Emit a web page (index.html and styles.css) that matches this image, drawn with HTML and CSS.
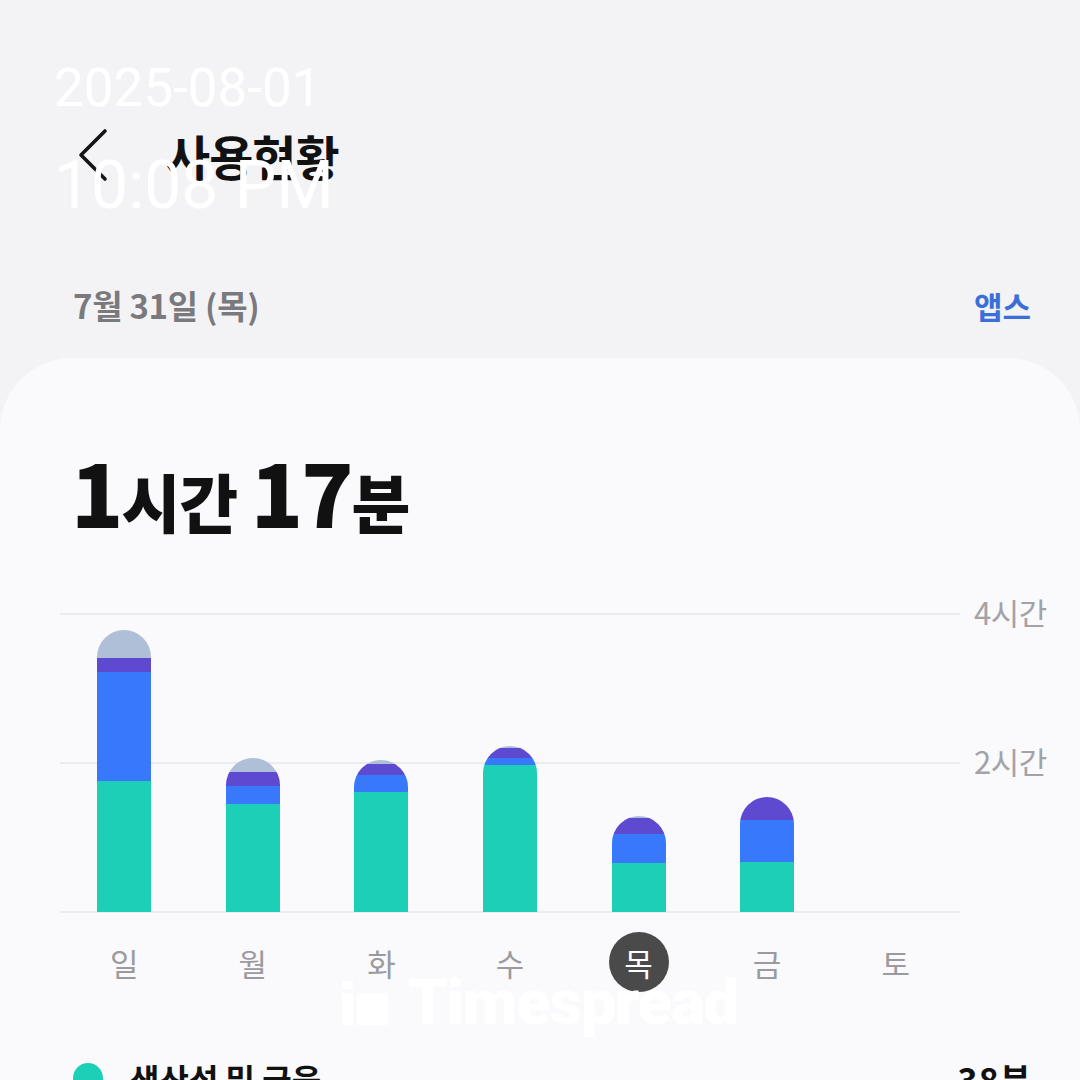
FILE: index.html
```html
<!doctype html>
<html>
<head>
<meta charset="utf-8">
<title>사용현황</title>
<link rel="stylesheet" href="styles.css">
</head>
<body>
	<div class="header">
		<svg class="back" width="34" height="54" viewBox="0 0 34 54"><polyline points="29,3 5,27 29,51" fill="none" stroke="#151515" stroke-width="3.6" stroke-linecap="round" stroke-linejoin="round"/></svg>
		<h1 class="title">사용현황</h1>
	</div>
	<div class="subhead">
		<span class="date">7월 31일 (목)</span>
		<span class="apps">앱스</span>
	</div>
	<div class="card">
		<div class="total"><b>1</b>시간 <b>17</b>분</div>
		<div class="chart">
			<div class="plot">
				<div class="col"><div class="bar">
					<i class="s-other" style="height:28px"></i><i class="s-purple" style="height:14px"></i><i class="s-blue" style="height:109px"></i><i class="s-teal" style="height:131px"></i>
				</div></div>
				<div class="col"><div class="bar">
					<i class="s-other" style="height:14px"></i><i class="s-purple" style="height:14px"></i><i class="s-blue" style="height:18px"></i><i class="s-teal" style="height:108px"></i>
				</div></div>
				<div class="col"><div class="bar">
					<i class="s-other" style="height:4px"></i><i class="s-purple" style="height:11px"></i><i class="s-blue" style="height:17px"></i><i class="s-teal" style="height:120px"></i>
				</div></div>
				<div class="col"><div class="bar">
					<i class="s-other" style="height:2px"></i><i class="s-purple" style="height:10px"></i><i class="s-blue" style="height:7px"></i><i class="s-teal" style="height:147px"></i>
				</div></div>
				<div class="col"><div class="bar">
					<i class="s-other" style="height:2px"></i><i class="s-purple" style="height:16px"></i><i class="s-blue" style="height:29px"></i><i class="s-teal" style="height:49px"></i>
				</div></div>
				<div class="col"><div class="bar">
					<i class="s-purple" style="height:23px"></i><i class="s-blue" style="height:42px"></i><i class="s-teal" style="height:50px"></i>
				</div></div>
				<div class="col"></div>
			</div>
			<div class="axis">
				<span>4시간</span>
				<span>2시간</span>
			</div>
		</div>
		<div class="days">
			<span>일</span><span>월</span><span>화</span><span>수</span><span class="on">목</span><span>금</span><span>토</span>
		</div>
		<div class="legend">
			<span class="dot"></span>
			<span class="cat">생산성 및 금융</span>
			<span class="mins">38분</span>
		</div>
	</div>

	<!-- 촬영 시각 워터마크 -->
	<div class="stamp">
		<div class="stamp-date">2025-08-01</div>
		<div class="stamp-time">10:08 PM</div>
	</div>
	<div class="brand">
		<svg width="46" height="44" viewBox="0 0 46 44"><rect x="0" y="0" width="11" height="8" fill="#fff"/><rect x="0" y="12" width="11" height="32" fill="#fff"/><rect x="15" y="12" width="31" height="32" fill="#fff"/></svg>
		<span>Timespread</span>
	</div>
</body>
</html>
```

FILE: styles.css
```css
*{ margin:0; padding:0; box-sizing:border-box; }
body{ width:1080px; height:1080px; overflow:hidden; position:relative; background:#f3f3f5; font-family:"Noto Sans CJK KR", "Noto Sans", sans-serif; color:#111; }

.header{ height:210px; padding-top:100px; display:flex; align-items:center; }
.back{ margin-left:76px; }
.title{ margin-left:56px; font-size:48px; font-weight:700; line-height:1; letter-spacing:-1px; }

.subhead{ height:148px; padding:42px 49px 0 73px; display:flex; align-items:center; justify-content:space-between; }
.date{ font-size:33px; font-weight:700; color:#7a7a7e; letter-spacing:-0.3px; }
.apps{ font-size:31px; font-weight:700; color:#3a6fd8; }

.card{ height:722px; background:#fafafc; border-radius:72px 72px 0 0; padding-top:83px; }
.total{ padding-left:71px; font-size:64px; font-weight:900; line-height:100px; letter-spacing:-1px; }
.total b{ font-size:86px; font-weight:900; letter-spacing:-2px; }

.chart{ display:flex; margin-top:63px; padding-left:60px; }
.plot{ width:900px; height:300px; display:grid; grid-template-columns:repeat(7, 1fr); align-items:end;
	background:linear-gradient(#ececf0, #ececf0) 0 0/100% 2px no-repeat, linear-gradient(#ececf0, #ececf0) 0 149px/100% 2px no-repeat, linear-gradient(#ececf0, #ececf0) 0 298px/100% 2px no-repeat; }
.col{ display:flex; justify-content:center; height:100%; align-items:flex-end; padding-bottom:1px; }
.bar{ width:54px; border-radius:27px 27px 0 0; overflow:hidden; display:flex; flex-direction:column; }
.bar i{ display:block; }
.s-other{ background:#b0bfd8; }
.s-purple{ background:#5e4ad0; }
.s-blue{ background:#3878fa; }
.s-teal{ background:#1ecfb7; }
.axis{ display:flex; flex-direction:column; margin-left:14px; margin-top:-24px; }
.axis span{ height:149px; font-size:31px; line-height:46px; color:#a3a3a7; letter-spacing:-0.5px; }

.days{ display:grid; grid-template-columns:repeat(7, 1fr); width:900px; margin:19px 0 0 60px; height:60px; }
.days span{ display:flex; align-items:center; justify-content:center; font-size:31px; color:#9b9b9f; }
.days .on{ width:60px; height:60px; justify-self:center; border-radius:50%; background:#4a4a4a; color:#fff; }

.legend{ display:flex; align-items:center; height:60px; margin-top:56px; padding:0 48px 0 73px; }
.dot{ width:30px; height:30px; border-radius:50%; background:#1ecfb7; }
.cat{ margin-left:27px; font-size:32px; font-weight:700; }
.mins{ margin-left:auto; font-size:34px; font-weight:700; letter-spacing:1px; }

.stamp{ position:absolute; left:54px; top:57px; color:#fff; font-family:Roboto, "Noto Sans", sans-serif; }
.stamp-date{ font-size:53px; line-height:62px; }
.stamp-time{ font-size:66px; line-height:76px; margin-top:29px; }

.brand{ position:absolute; left:342px; top:966px; display:flex; align-items:center; color:#fff; font-family:Roboto, sans-serif; font-weight:900; font-size:63px; letter-spacing:-1px; }
.brand span{ margin-left:20px; }
```
